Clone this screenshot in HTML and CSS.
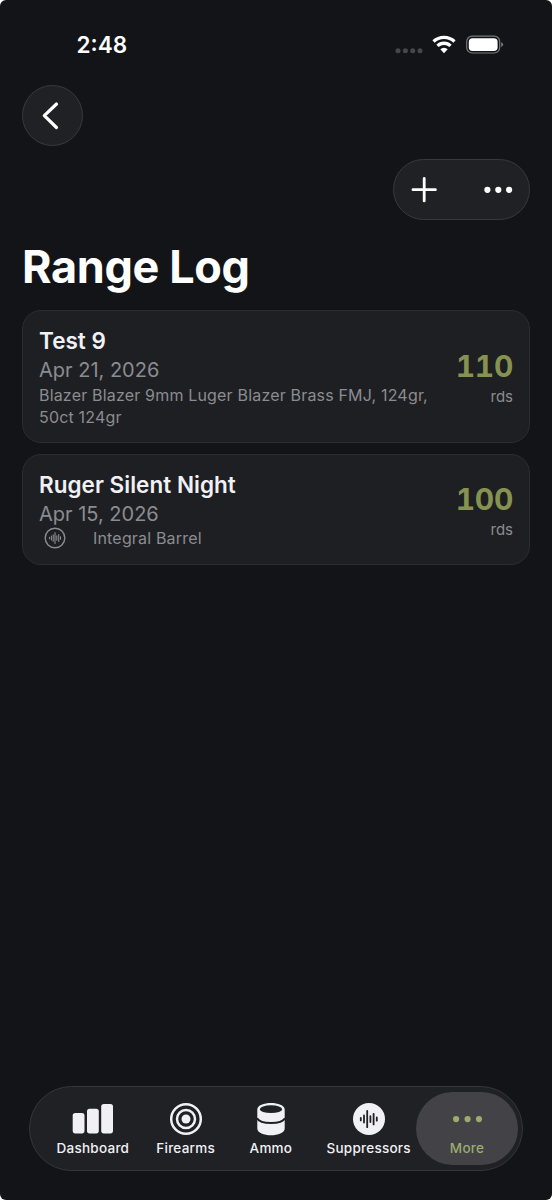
FILE: index.html
```
<!DOCTYPE html>
<html lang="en">
<head>
<meta charset="utf-8">
<title>Range Log</title>
<link rel="stylesheet" href="styles.css">
</head>
<body>
<div class="screen">
  <header class="status">
    <span class="time">2:48</span>
    <svg class="status-icons" width="110" height="20" viewBox="0 0 110 20">
      <g fill="#46474b"><circle cx="3" cy="15.7" r="2.5"/><circle cx="10.4" cy="15.7" r="2.5"/><circle cx="17.7" cy="15.7" r="2.5"/><circle cx="25" cy="15.7" r="2.5"/></g>
      <g fill="none" stroke="#fff" stroke-width="3.3"><path d="M38.5 6.5a15.3 15.3 0 0 1 21 0"/><path d="M42.5 10.9a9.3 9.3 0 0 1 13 0"/></g>
      <path d="M45.3 14.3a5.3 5.3 0 0 1 7.4 0L49 18.2z" fill="#fff"/>
      <rect x="71.7" y="1.2" width="33" height="16.8" rx="5.4" fill="none" stroke="#77787b" stroke-width="1.2"/>
      <rect x="73.8" y="3.3" width="28.8" height="12.6" rx="3.7" fill="#fff"/>
      <path d="M106.2 7.2q2 .7 2 2.4t-2 2.4z" fill="#77787b"/>
    </svg>
  </header>
  <nav class="back-row">
    <button class="glass back" aria-label="Back"><svg width="59" height="59" viewBox="0 0 59 59"><path d="M33.5 18 21.3 29.7 33.5 41.5" fill="none" stroke="#fff" stroke-width="3.2" stroke-linecap="round" stroke-linejoin="round"/></svg></button>
  </nav>
  <div class="tool-row">
    <div class="glass tools"><svg width="135" height="59" viewBox="0 0 135 59"><path d="M19 29.7h22.4M30.2 18.5v22.4" stroke="#fff" stroke-width="2.8" stroke-linecap="round"/><g fill="#fff"><circle cx="93.4" cy="29.8" r="3.1"/><circle cx="104.3" cy="29.8" r="3.1"/><circle cx="115.1" cy="29.8" r="3.1"/></g></svg></div>
  </div>
  <h1 class="title">Range Log</h1>
  <main class="list">
    <article class="card first">
      <div class="details">
        <h2 class="name">Test 9</h2>
        <p class="date">Apr 21, 2026</p>
        <p class="note">Blazer Blazer 9mm Luger Blazer Brass FMJ, 124gr,<br>50ct 124gr</p>
      </div>
      <div class="rounds"><strong class="count">110</strong><span class="unit">rds</span></div>
    </article>
    <article class="card second">
      <div class="details">
        <h2 class="name">Ruger Silent Night</h2>
        <p class="date">Apr 15, 2026</p>
        <p class="note barrel"><svg width="22" height="22" viewBox="0 0 22 22" fill="none" stroke="#8b8c90"><circle cx="11" cy="11" r="9.8" stroke-width="1.4"/><path d="M5.5 10.2v1.6M7.4 9v4M9.2 7.7v6.6M11 5.5v11M12.8 8.7v4.6M14.7 7.5v7M16.5 9.7v2.6" stroke-width="1.1" stroke-linecap="round"/></svg><span>Integral Barrel</span></p>
      </div>
      <div class="rounds"><strong class="count">100</strong><span class="unit">rds</span></div>
    </article>
  </main>
  <nav class="tabs">
    <a class="tab dashboard"><svg width="42" height="34" viewBox="0 0 42 34" fill="#f1f1f5"><rect x=".7" y="11" width="11.8" height="20.4" rx="2.6"/><rect x="15" y="6.7" width="11.8" height="24.7" rx="2.6"/><rect x="29.2" y="1.9" width="11.8" height="29.5" rx="2.6"/></svg><span>Dashboard</span></a>
    <a class="tab firearms"><svg width="34" height="34" viewBox="0 0 34 34" fill="none" stroke="#f1f1f5" stroke-width="2.5"><circle cx="17" cy="17" r="14.8"/><circle cx="17" cy="17" r="9"/><circle cx="17" cy="17" r="4.5" fill="#f1f1f5" stroke="none"/></svg><span>Firearms</span></a>
    <a class="tab ammo"><svg width="34" height="34" viewBox="0 0 34 34"><path d="M3.3 7.5C3.3-1.3 30.7-1.3 30.7 7.5v19c0 9-27.4 9-27.4 0z" fill="#f1f1f5"/><ellipse cx="17" cy="7.2" rx="11.2" ry="3.9" fill="#202125"/><path d="M3 16.3c3.5 6.3 24.5 6.3 28 0" fill="none" stroke="#202125" stroke-width="2"/></svg><span>Ammo</span></a>
    <a class="tab suppressors"><svg width="34" height="34" viewBox="0 0 34 34"><circle cx="17" cy="17" r="16" fill="#f1f1f5"/><path d="M8.8 15.8v2.6M12 13.5v7M15.2 9v16.2M18.4 14.2v5.8M21.6 11.8v10.6M24.8 15.5v3.2" fill="none" stroke="#202125" stroke-width="1.8" stroke-linecap="round"/></svg><span>Suppressors</span></a>
    <a class="tab more"><svg width="34" height="34" viewBox="0 0 34 34" fill="#9bac6d"><circle cx="6.1" cy="17.1" r="3.1"/><circle cx="17.6" cy="17.1" r="3.1"/><circle cx="29" cy="17.1" r="3.1"/></svg><span>More</span></a>
  </nav>
</div>
</body>
</html>
```
FILE: styles.css
```
* { box-sizing: border-box; }
body { margin: 0; background: #fff; font-family: Inter, "Liberation Sans", sans-serif; }
.screen { width: 552px; height: 1200px; display: flex; flex-direction: column; padding: 0 22px; background: #131418; border-radius: 6px; overflow: hidden; }
h1, h2, p { margin: 0; }
svg { display: block; flex: none; }
.status { height: 85px; flex: none; display: flex; justify-content: space-between; align-items: flex-start; padding: 35px 25px 0 54.5px; }
.time { color: #fff; font-size: 22.5px; line-height: 20px; font-weight: 600; letter-spacing: 0; }
.glass { background: #202125; border: 1px solid #38393d; border-radius: 31px; }
.back-row { height: 74px; flex: none; }
.back { display: flex; width: 61px; height: 61px; padding: 0; }
.tool-row { height: 61px; flex: none; display: flex; justify-content: flex-end; }
.tools { width: 137px; height: 61px; }
.title { color: #fff; font-size: 45px; line-height: 54px; font-weight: 700; letter-spacing: -.35px; margin-top: 20px; height: 70px; }
.list { display: flex; flex-direction: column; gap: 11px; }
.card { display: flex; justify-content: space-between; border: 1.5px solid #2c2d31; border-radius: 19px; background: #1e1f23; padding: 0 16px; }
.first { height: 133px; }
.second { height: 111px; }
.details { padding-top: 15px; }
.name { color: #f1f1f5; font-size: 22.5px; line-height: 30px; font-weight: 600; letter-spacing: .03px; white-space: nowrap; padding-bottom: 1px; }
.date { color: #8b8c90; font-size: 20px; line-height: 27px; white-space: nowrap; }
.note { color: #8b8c90; font-size: 16px; line-height: 22px; letter-spacing: .18px; white-space: nowrap; }
.barrel { display: flex; gap: 27.5px; padding-left: 4.5px; margin-top: -1px; }
.rounds { display: flex; flex-direction: column; justify-content: center; align-items: flex-end; padding-top: 4px; }
.count { color: #86924f; font-size: 30px; line-height: 35px; font-weight: 700; font-variant-numeric: tabular-nums; letter-spacing: -.3px; }
.unit { color: #8b8c90; font-size: 15px; line-height: 25px; }
.tabs { flex: none; width: 494px; height: 85px; margin: auto 0 29px 7px; padding: 5px 4px 5px 21px; display: flex; background: #202125; border: 1px solid #36373b; border-radius: 43px; }
.tab { display: flex; flex-direction: column; align-items: center; padding-top: 10px; color: #f1f1f5; font-size: 13.5px; line-height: 24px; font-weight: 500; letter-spacing: .25px; }
.dashboard { width: 84px; }
.firearms { width: 102px; }
.ammo { width: 69px; }
.suppressors { width: 127px; }
.more { width: 102px; height: 73px; border-radius: 37px; background: #424247; color: #9bac6d; margin-left: -16px; flex: none; }
```
